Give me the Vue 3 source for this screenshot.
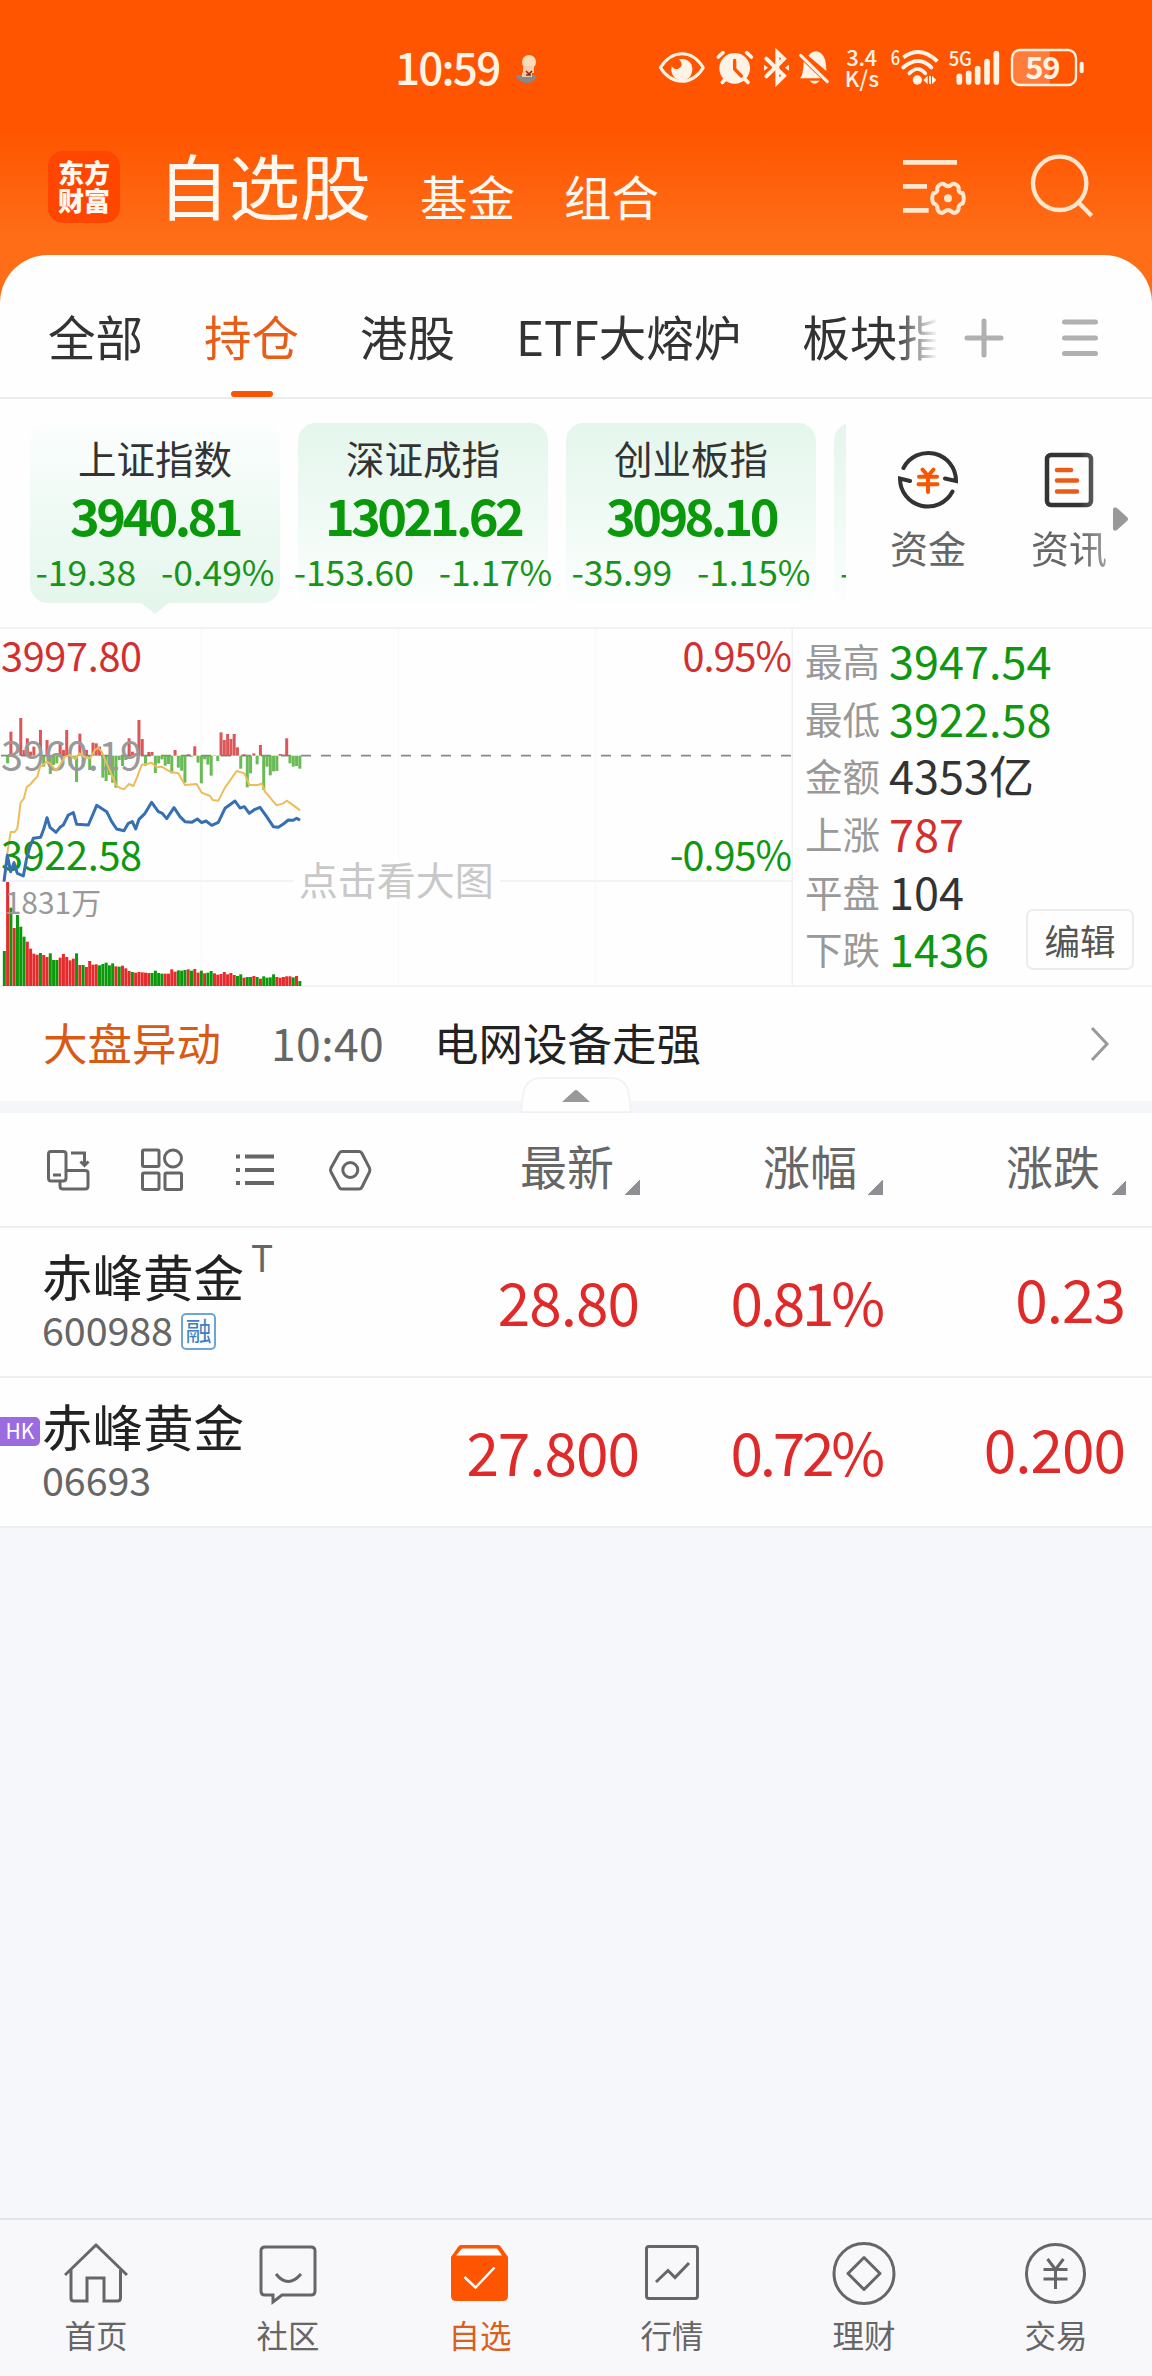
<script setup>
import { ref } from 'vue'

const tabs = ref(['全部', '持仓', '港股', 'ETF大熔炉', '板块指数'])
const activeTab = ref('持仓')

const indexes = ref([
  { name: '上证指数', value: '3940.81', change: '-19.38', percent: '-0.49%' },
  { name: '深证成指', value: '13021.62', change: '-153.60', percent: '-1.17%' },
  { name: '创业板指', value: '3098.10', change: '-35.99', percent: '-1.15%' }
])
const activeIndex = ref('上证指数')

const stats = ref([
  { label: '最高', value: '3947.54', color: 'green' },
  { label: '最低', value: '3922.58', color: 'green' },
  { label: '金额', value: '4353亿', color: 'dark' },
  { label: '上涨', value: '787', color: 'red' },
  { label: '平盘', value: '104', color: 'dark' },
  { label: '下跌', value: '1436', color: 'green' }
])

const stocks = ref([
  { id: 1, name: '赤峰黄金', code: '600988', mark: 'T', tag: '融', price: '28.80', percent: '0.81%', change: '0.23' },
  { id: 2, name: '赤峰黄金', code: '06693', market: 'HK', price: '27.800', percent: '0.72%', change: '0.200' }
])
const columns = ['最新', '涨幅', '涨跌']

const navs = ref(['首页', '社区', '自选', '行情', '理财', '交易'])
const activeNav = ref('自选')

// minute bars: x step in chart units
const step = 9.85
const barX = (i) => 8 + i * step

// volume, height of every minute
const volumes = [
  105, 312, 235, 174, 213, 178, 148, 133, 112, 97, 94, 99, 93, 87, 98, 78, 78, 85, 96, 87, 77, 82, 98, 63, 63, 57, 75,
  64, 65, 62, 66, 70, 62, 68, 59, 58, 61, 53, 45, 42, 40, 42, 41, 40, 39, 39, 46, 39, 37, 37, 37, 50, 43, 47, 46, 48,
  50, 46, 51, 40, 46, 38, 40, 45, 38, 34, 36, 42, 35, 39, 33, 30, 35, 25, 27, 27, 30, 27, 22, 29, 25, 26, 35, 27, 25,
  27, 29, 29, 26, 30, 15
]
const volumeColors =
  'grgrgggrrrrgrrgggrrrrrgrgrrrrgggggrgrrrgrrrrrggggrrrrgggrgrrgrggrrrrrrrggrggrgrggggrrrrrgrg'

// strength bars round the zero line, positive is red
const strengths = [
  0, -23, 72, 2, 1, 113, 17, 52, 12, 27, 2, 77, -33, 47, -55, -28, -23, 37, 17, 77, -30, -8, -79, 66, -33, 17, -43, 39,
  37, 27, -66, -76, -58, -81, -96, -13, -31, -13, 52, 12, 7, 107, 50, -30, 11, 11, -52, -23, -11, -30, -25, -53, 17,
  -36, -45, -81, 4, -3, 28, -21, -83, -11, -27, -60, 1, -16, 70, 47, 65, 50, 65, 25, -39, 4, -95, -53, 7, -26, 32,
  -103, -33, -59, -47, -46, 5, 3, 52, -23, -33, -31, -39
]

const averageLine =
  '12,783 22,700 32,636 44,636 52,625 62,548 72,535 80,502 92,492 102,480 112,470 120,440 130,435 140,425 150,430 168,452 180,435 195,410 210,405 225,418 238,400 255,412 270,415 285,390 295,383 305,395 320,430 333,460 348,495 360,504 372,508 387,492 400,498 412,470 425,435 440,432 455,428 470,442 485,440 510,455 535,460 555,495 590,492 605,518 630,528 638,540 655,542 675,503 710,453 733,460 748,495 775,495 785,490 795,515 830,556 850,550 860,542 880,556 900,571'
const priceLine =
  '12,785 22,706 32,755 42,728 52,760 70,768 80,715 90,680 100,655 122,652 132,625 141,593 150,622 168,637 180,622 190,615 205,585 220,578 230,613 265,615 280,580 290,556 320,575 335,605 350,627 372,632 385,610 397,605 407,627 417,598 435,580 455,547 475,575 487,580 500,596 522,563 540,590 555,605 575,607 592,597 605,608 618,603 635,616 655,607 675,565 705,543 720,564 733,560 748,580 765,568 780,562 800,590 820,620 835,622 850,612 865,600 880,601 890,595 900,601'
</script>

<template>
  <div class="page">
    <header class="top">
      <div class="status">
        <span class="clock">10:59</span>
        <svg class="avatar" width="24" height="30" viewBox="0 0 24 30">
          <path d="M0 21 L22 21 Q20 29 11 29 Q4 28 0 21Z" fill="#84888f" />
          <path d="M7 19 Q12 15 17 19 L17 23 L7 23Z" fill="#efc8a5" />
          <circle cx="14" cy="8" r="7" fill="#fcdcb8" />
          <path d="M8 12h11v7h-11z" fill="#f6cfaa" />
          <path d="M11 17l3 3 3-3M11 21h5" stroke="#8d2a20" stroke-width="1.6" fill="none" />
        </svg>
        <svg class="status-icons" width="512" height="80" viewBox="0 0 1536 240">
          <g fill="none" stroke="#fff3e6" stroke-width="9" stroke-linecap="round" stroke-linejoin="round">
            <path d="M61 113 Q88 71 126 71 Q164 71 190 113 Q164 154 126 154 Q88 154 61 113Z" />
            <path d="M235 81l14-13M320 68l14 13M247 157l8-8M324 157l-8-8" stroke-width="11" />
            <path d="M379 86l53 51-20 20V67l20 19-53 53" stroke-width="12" stroke-linejoin="miter" />
            <path d="M482 76l80 79" stroke-width="9" />
            <path d="M790 82Q841 45 892 94" stroke-width="12" stroke-linecap="butt" />
            <path d="M790 112Q836 74 874 112" stroke-width="12" />
            <path d="M808 130Q834 104 856 130" stroke-width="11" />
            <rect x="1116" y="60" width="192" height="105" rx="24" stroke-width="7" />
            <path d="M1325 101v23" stroke-width="12" />
            <path d="M958 139v17" stroke-width="17" />
            <path d="M986 130v26M1013 116v40M1041 95v61M1069 71v85" stroke-width="17" />
          </g>
          <g fill="#fff3e6">
            <path d="M117 88 Q135 106 114 117 Q101 119 95 108 Q90 130 106 145 Q128 157 147 143 Q163 126 154 103 Q142 84 117 88Z" />
            <circle cx="284" cy="115" r="46" />
            <path d="M372 104l12 9-12 9zM447 104l-12 9 12 9z" />
            <path d="M505 77Q523 55 543 70Q559 82 559 123ZM491 95L542 145H480Q490 135 491 95Z" />
            <path d="M509 152h30q-15 18-30 0z" />
            <circle cx="832" cy="150" r="14" />
            <path d="M850 150l13-13v26zM867 137l6 2v24l-6-2zM889 150l-13-13v26z" />
            <path d="M1140 62h89v101h-89q-22 0-22-24v-53q0-24 22-24z" opacity=".25" />
          </g>
          <path d="M284 91v26l20 21" stroke="#ff5500" stroke-width="10" fill="none" stroke-linecap="round" />
          <g class="status-text">
            <text x="619" y="107" font-size="66" textLength="92">3.4</text>
            <text x="614" y="171" font-size="66" textLength="103">K/s</text>
            <text x="752" y="105" font-size="60" textLength="28" lengthAdjust="spacingAndGlyphs">6</text>
            <text x="926" y="109" font-size="62" textLength="70" lengthAdjust="spacingAndGlyphs">5G</text>
            <text x="1156" y="147" font-size="93" textLength="106" class="bold">59</text>
          </g>
        </svg>
      </div>
      <div class="title-bar">
        <div class="logo"><span>东方</span><span>财富</span></div>
        <h1>自选股</h1>
        <span class="sub-title">基金</span>
        <span class="sub-title">组合</span>
        <svg class="filter" width="70" height="70" viewBox="120 65 210 210" fill="none" stroke="#ffe6cf" stroke-width="14">
          <path d="M129 99h162M129 171h72M129 243h77" />
          <path
            d="M251 164Q264 177 277 164Q283 162 290 167Q298 171 296 184Q300 192 308 192Q315 207 308 222Q299 224 296 232Q297 245 288 249Q281 253 275 247Q264 238 253 247Q247 253 240 249Q231 245 232 232Q229 224 220 222Q213 207 220 192Q228 192 232 184Q230 171 238 167Q245 162 251 164Z"
            stroke-width="12"
          />
          <circle cx="264" cy="207" r="12" fill="#ffe6cf" stroke="none" />
        </svg>
        <svg class="search" width="70" height="70" viewBox="500 65 210 210" fill="none" stroke="#ffe6cf" stroke-width="13">
          <circle cx="598" cy="162" r="80" />
          <path d="M653 218l41 41" />
        </svg>
      </div>
    </header>

    <main class="panel">
      <nav class="tabs">
        <div class="tab-list">
          <span v-for="tab in tabs" :key="tab" class="tab" :class="{ active: tab === activeTab }" @click="activeTab = tab">{{ tab }}</span>
        </div>
        <svg class="plus" width="40" height="40" viewBox="0 0 40 40">
          <path d="M20 3v34M3 20h34" stroke="#b0b0b0" stroke-width="5" stroke-linecap="round" />
        </svg>
        <svg class="menu" width="36" height="40" viewBox="0 0 36 40">
          <path d="M2.5 4h31M2.5 20h31M2.5 35.500h31" stroke="#b0b0b0" stroke-width="5" stroke-linecap="round" />
        </svg>
      </nav>

      <section class="indexes">
        <div class="cards">
          <div v-for="item in indexes" :key="item.name" class="card" :class="{ active: item.name === activeIndex }" @click="activeIndex = item.name">
            <span class="card-name">{{ item.name }}</span>
            <strong class="card-value">{{ item.value }}</strong>
            <span class="card-change"><span>{{ item.change }}</span><span>{{ item.percent }}</span></span>
          </div>
          <div class="card partial"><span class="card-change">-</span></div>
        </div>
        <div class="quick">
          <svg width="64" height="64" viewBox="0 0 64 64" fill="none" stroke="#333" stroke-width="4" stroke-linecap="round">
            <path d="M7.500 20A27.800 27.800 0 0 1 60 33L49 30.500M56.500 43.500A27.800 27.800 0 0 1 4 30.500L14 33" />
            <path d="M26.500 21.500L32 28l5.500-6.500M23 28.700h18M22.500 36.300h19M32 28v16" stroke="#fa5500" />
          </svg>
          <span>资金</span>
        </div>
        <div class="quick news">
          <svg width="64" height="64" viewBox="0 0 64 64" fill="none" stroke="#333" stroke-width="4.500">
            <rect x="10" y="7" width="44" height="50" rx="4" />
            <path d="M20 22h14M20 32.500h20M20 43.500h20" stroke="#e85d18" stroke-linecap="round" />
          </svg>
          <span>资讯</span>
        </div>
        <svg class="more" width="15" height="26" viewBox="0 0 15 26">
          <path d="M0 3Q1 0 4 2L14 11Q16 13 14 15L4 24Q1 26 0 23Z" fill="#999" />
        </svg>
      </section>

      <section class="market">
        <svg class="chart" width="793" height="360" viewBox="0 21 2379 1080">
          <path d="M604 24V1098M1195 24V1098M1786 24V1098" stroke="#f0f0f2" stroke-width="3" stroke-dasharray="4 4" />
          <path d="M0 24H2379M0 783H2379M0 1098H2379M2377 24V1098" stroke="#f0f0f2" stroke-width="5" fill="none" />
          <rect x="880" y="715" width="620" height="130" fill="#fefefe" />
          <path d="M0 407H2373" stroke="#888" stroke-width="5" stroke-dasharray="30 30" stroke-dashoffset="-3" />
          <rect
            v-for="(s, i) in strengths"
            :key="'s' + i"
            :x="barX(i) + 0.5"
            :y="s > 0 ? 407 - s : 407"
            width="9"
            :height="Math.abs(s)"
            :fill="s > 0 ? '#d94a4a' : '#5fb548'"
            opacity="0.93"
          />
          <text x="3" y="450" class="num gray">3960.19</text>
          <polyline :points="averageLine" fill="none" stroke="#ecbd58" stroke-width="6" stroke-linejoin="round" />
          <text x="3" y="153" class="num red">3997.80</text>
          <text x="2373" y="153" class="num percent red" text-anchor="end">0.95%</text>
          <text x="3" y="749" class="num green">3922.58</text>
          <text x="2373" y="749" class="num percent green" text-anchor="end">-0.95%</text>
          <polyline :points="priceLine" fill="none" stroke="#376fb3" stroke-width="9" stroke-linejoin="round" />
          <rect
            v-for="(v, i) in volumes"
            :key="'v' + i"
            :x="barX(i) + 0.5"
            :y="1098 - v"
            width="9"
            :height="v"
            :fill="volumeColors[i] === 'r' ? '#e52b2b' : '#0a990a'"
          />
          <text x="14" y="882" class="volume">1831万</text>
          <text x="896" y="824" class="hint">点击看大图</text>
        </svg>
        <div class="stats">
          <div v-for="stat in stats" :key="stat.label" class="stat">
            <span class="stat-label">{{ stat.label }}</span>
            <span class="stat-value" :class="stat.color">{{ stat.value }}</span>
          </div>
          <button class="edit">编辑</button>
        </div>
      </section>

      <section class="alert">
        <span class="alert-title">大盘异动</span>
        <span class="alert-time">10:40</span>
        <span class="alert-text">电网设备走强</span>
        <svg class="chevron" width="20" height="36" viewBox="0 0 20 36">
          <path d="M2 2l15 16L2 34" fill="none" stroke="#999" stroke-width="3" />
        </svg>
      </section>
      <div class="divider">
        <svg class="handle" width="112" height="36" viewBox="0 0 112 36">
          <path d="M1 35L3 18Q5 1 22 1H90Q107 1 109 18L111 35Z" fill="#fefefe" stroke="#f1f1f3" stroke-width="1.500" />
          <path d="M42 25L54 14Q56 12 58 14L70 25Z" fill="#999" />
        </svg>
      </div>

      <section class="list">
        <div class="list-head">
          <div class="tools">
            <svg width="44" height="44" viewBox="0 0 44 44">
              <path d="M14 33H5Q2.500 33 2.500 30V6Q2.500 3.500 5 3.500H17Q20 3.500 20 6V22M14 32V38Q14 41 17 41H39Q42 41 42 38V25Q42 22.500 39 22.500H20V30Q20 33 17 33H14M25 5H38.500V17M34.500 13.500l4 4 4-4M7 27h8" />
            </svg>
            <svg width="44" height="44" viewBox="0 0 44 44">
              <rect x="2.500" y="2" width="16.500" height="16.500" rx="1.500" />
              <circle cx="33" cy="10.500" r="8.500" />
              <rect x="2.500" y="25" width="16.500" height="16.500" rx="1.500" />
              <rect x="25" y="25" width="16.500" height="16.500" rx="1.500" />
            </svg>
            <svg width="44" height="44" viewBox="0 0 44 44">
              <path d="M2 8.500h4M11 8.500h29M2 22h4M11 22h29M2 35h4M11 35h29" stroke-width="4" />
            </svg>
            <svg width="44" height="44" viewBox="0 0 44 44">
              <path d="M14 3.500H31Q33 3.500 34 5.500L41.500 20Q42.300 22 41.500 24L34 39Q33 41 31 41H14Q12 41 11 39L3 24Q2 22 3 20L11 5.500Q12 3.500 14 3.500Z" />
              <circle cx="22.300" cy="22" r="7.500" />
            </svg>
          </div>
          <div v-for="column in columns" :key="column" class="column">
            <span>{{ column }}</span>
            <i class="sort"></i>
          </div>
        </div>
        <div v-for="stock in stocks" :key="stock.id" class="row">
          <span v-if="stock.market" class="market-tag">{{ stock.market }}</span>
          <div class="stock">
            <div class="stock-name">{{ stock.name }}<sup v-if="stock.mark">{{ stock.mark }}</sup></div>
            <div class="stock-code">{{ stock.code }}<span v-if="stock.tag" class="tag">{{ stock.tag }}</span></div>
          </div>
          <span class="price">{{ stock.price }}</span>
          <span class="price rate">{{ stock.percent }}</span>
          <span class="price last">{{ stock.change }}</span>
        </div>
      </section>
    </main>

    <footer class="nav">
      <div v-for="(nav, i) in navs" :key="nav" class="nav-item" :class="{ active: nav === activeNav }" @click="activeNav = nav">
        <svg width="64" height="66" viewBox="0 0 64 66">
          <path v-if="i === 0" d="M1 34L32 4L63 34M7 29V57Q7 60 10 60H23V37H40V60H53Q56.500 60 56.500 57V29" />
          <path v-else-if="i === 1" d="M9 6H55Q59 6 59 10V50Q59 54 55 54H26L17 61V54H9Q5 54 5 50V10Q5 6 9 6ZM20 33Q32 48 45 33" />
          <g v-else-if="i === 2">
            <path d="M13 4H50Q52 4 53 6L60 16V55Q60 60 55 60H8Q3 60 3 55V16L10 6Q11 4 13 4Z" fill="#ff5500" stroke="none" />
            <path d="M14 7.500H49L54 14.500H8Z" fill="#fff" stroke="none" />
            <path d="M16.500 36L27.500 46.500L46.500 26.500" stroke="#fff" stroke-width="2.500" />
          </g>
          <path v-else-if="i === 3" d="M9 5.500H55Q57.500 5.500 57.500 8V55Q57.500 57.500 55 57.500H9Q6.500 57.500 6.500 55V8Q6.500 5.500 9 5.500ZM16 41L28 29.500L35 36.500L49 22" />
          <g v-else-if="i === 4">
            <circle cx="32" cy="32.500" r="30" />
            <path d="M32 16.500L48 32.500L32 48.500L16 32.500Z" stroke-linejoin="round" />
          </g>
          <g v-else>
            <circle cx="31.500" cy="32.500" r="29" />
            <path d="M23.500 18L31.500 28.500L39.500 18M19.500 28.500H43.500M19.500 38H43.500M31.500 28V48" />
          </g>
        </svg>
        <span>{{ nav }}</span>
      </div>
    </footer>
  </div>
</template>

<style>
body {
  background: #f6f7fa;
}
</style>

<style scoped>
.page {
  display: flex;
  flex-direction: column;
  width: 1152px;
  height: 2376px;
  overflow: hidden;
  background: #f6f7fa;
  font-family: 'Noto Sans CJK SC', sans-serif;
  color: #333;
}
svg {
  display: block;
  flex: none;
}
.green {
  color: #109710;
  fill: #109710;
}
.red {
  color: #d32f2f;
  fill: #d32f2f;
}
.dark {
  color: #333;
}

.top {
  height: 310px;
  flex: none;
  background: linear-gradient(#ff5500 0, #ff5500 130px, #ff6d17 235px, #ff6d17);
}
.status {
  display: flex;
  align-items: flex-start;
  height: 130px;
  padding: 30px 0 0 395px;
  box-sizing: border-box;
  color: #fff3e6;
}
.clock {
  width: 120px;
  margin-top: 4px;
  font-size: 44px;
  line-height: 64px;
  font-weight: 500;
  letter-spacing: -1.8px;
}
.avatar {
  margin-top: 24px;
}
.status-icons {
  margin-left: 101px;
}
.status-text {
  fill: #fff3e6;
  font-weight: 500;
}
.status-text .bold {
  font-weight: 700;
}
.title-bar {
  display: flex;
  align-items: flex-start;
  padding: 21px 0 0 48px;
  color: #fff8f0;
}
.logo {
  display: flex;
  flex-direction: column;
  align-items: center;
  justify-content: center;
  width: 72px;
  height: 72px;
  border-radius: 15px;
  background: #ff4600;
  font-size: 26px;
  line-height: 30px;
  font-weight: 900;
}
.logo span {
  margin-top: -2px;
}
h1 {
  margin: -8px 0 0 38px;
  font-size: 71px;
  line-height: 80px;
  font-weight: 400;
}
.sub-title {
  margin: 13px 0 0 49px;
  font-size: 47.500px;
  line-height: 64px;
}
.sub-title + .sub-title {
  margin-left: 49px;
}
.filter {
  margin-left: auto;
}
.search {
  margin: 0 55px 0 57px;
}

.panel {
  display: flex;
  flex-direction: column;
  margin-top: -55px;
  border-radius: 48px 48px 0 0;
  background: #fefefe;
}
.tabs {
  display: flex;
  align-items: center;
  height: 144px;
  box-sizing: border-box;
  padding: 24px 0 0 48px;
  border-bottom: 2px solid #ebebed;
}
.tab-list {
  display: flex;
  gap: 61px;
  width: 888px;
  overflow: hidden;
  white-space: nowrap;
  -webkit-mask-image: linear-gradient(90deg, #000 848px, transparent 890px);
  mask-image: linear-gradient(90deg, #000 848px, transparent 890px);
}
.tab {
  position: relative;
  height: 118px;
  font-size: 47.500px;
  line-height: 114px;
}
.tab.active {
  color: #e85d18;
}
.tab.active::after {
  content: '';
  position: absolute;
  left: 27px;
  bottom: 0;
  width: 42px;
  height: 6px;
  border-radius: 3px;
  background: #fa5500;
}
.plus {
  margin-left: 28px;
}
.menu {
  margin-left: 58px;
}

.indexes {
  display: flex;
  height: 228px;
}
.cards {
  display: flex;
  gap: 18px;
  width: 816px;
  padding: 24px 0 0 30px;
  overflow: hidden;
}
.card {
  position: relative;
  display: flex;
  flex-direction: column;
  align-items: center;
  flex: none;
  width: 250px;
  height: 180px;
  border-radius: 18px;
  background: linear-gradient(#e4f6ec, #fbfefd);
  white-space: nowrap;
}
.card.active {
  background: linear-gradient(#fbfefd, #e4f6ec);
}
.card.active::after {
  content: '';
  position: absolute;
  top: 179px;
  left: 110px;
  border: 15px solid transparent;
  border-top: 12px solid #e4f6ec;
  border-bottom: 0;
}
.card-name {
  margin-top: 9px;
  font-size: 38.500px;
  line-height: 50px;
}
.card-value {
  margin-top: 3px;
  font-size: 50.500px;
  line-height: 58px;
  font-weight: 700;
  letter-spacing: -3.6px;
  color: #0a990a;
}
.card-change {
  display: flex;
  gap: 25px;
  margin-top: 3px;
  font-size: 35.500px;
  line-height: 50px;
  letter-spacing: -0.1px;
  color: #1a931a;
}
.partial {
  align-items: flex-start;
  justify-content: flex-end;
}
.partial .card-change {
  margin: 0 0 7px 6px;
}
.quick {
  display: flex;
  flex-direction: column;
  align-items: center;
  width: 80px;
  margin: 49px 0 0 42px;
  font-size: 38px;
  line-height: 50px;
  color: #666;
}
.quick span {
  margin-top: 10px;
}
.news {
  margin-left: 61px;
  -webkit-mask-image: linear-gradient(90deg, #000 50px, rgba(0, 0, 0, 0.6) 80px);
  mask-image: linear-gradient(90deg, #000 50px, rgba(0, 0, 0, 0.6) 80px);
}
.more {
  margin: 107px 0 0 4px;
}

.market {
  display: flex;
  height: 360px;
}
.num {
  font-size: 119px;
  letter-spacing: -1px;
}
.num.percent {
  letter-spacing: -3px;
}
.gray {
  fill: #999;
}
.volume {
  font-size: 90px;
  fill: #999;
}
.hint {
  font-size: 117px;
  fill: #c8c8c8;
}
.stats {
  position: relative;
  flex: 1;
  height: 360px;
  box-sizing: border-box;
  padding: 2px 0 0 12px;
  border-top: 2px solid #f2f2f4;
  border-bottom: 2px solid #f2f2f4;
}
.stat {
  display: flex;
  height: 57.700px;
  line-height: 57px;
}
.stat-label {
  width: 84px;
  font-size: 37.500px;
  color: #999;
}
.stat-value {
  font-size: 45px;
}
.edit {
  position: absolute;
  right: 18px;
  bottom: 15px;
  width: 108px;
  height: 61px;
  padding: 0;
  border: 2px solid #ececee;
  border-radius: 7px;
  background: #fefefe;
  font-family: inherit;
  font-size: 35.500px;
  line-height: 52px;
  color: #555;
}

.alert {
  display: flex;
  align-items: center;
  height: 114px;
  padding: 0 42px 0 43px;
  font-size: 44.500px;
  line-height: 60px;
}
.alert span {
  margin-bottom: 4px;
}
.alert-title {
  width: 228px;
  color: #d95a14;
}
.alert-time {
  width: 163px;
  letter-spacing: 0.4px;
  color: #666;
}
.alert-text {
  color: #222;
}
.chevron {
  margin-left: auto;
}
.divider {
  position: relative;
  height: 12px;
  background: #f5f6f9;
}
.handle {
  position: absolute;
  left: 520px;
  bottom: 0;
}

.list-head {
  display: flex;
  align-items: center;
  height: 115px;
  box-sizing: border-box;
  border-bottom: 2px solid #efeff1;
  font-size: 47px;
  line-height: 60px;
  color: #666;
}
.tools {
  display: flex;
  gap: 50px;
  width: 351px;
  padding-left: 46px;
}
.tools svg {
  fill: none;
  stroke: #666;
  stroke-width: 3;
}
.column {
  display: flex;
  align-items: center;
  justify-content: flex-end;
  width: 243px;
}
.column span {
  margin-bottom: 10px;
}
.sort {
  width: 15px;
  height: 15px;
  margin: 36px 0 0 11px;
  background: linear-gradient(135deg, transparent 50%, #8e8e93 50%);
}
.row {
  position: relative;
  display: flex;
  height: 150px;
  box-sizing: border-box;
  border-bottom: 2px solid #efeff1;
}
.stock {
  width: 354px;
  padding: 14px 0 0 42px;
}
.stock-name {
  display: flex;
  font-size: 50.500px;
  line-height: 66px;
  color: #222;
}
.stock-name sup {
  margin: -12px 0 0 7px;
  font-size: 37px;
  line-height: 52px;
  color: #666;
}
.stock-code {
  display: flex;
  align-items: center;
  font-size: 39.500px;
  line-height: 42px;
  letter-spacing: -0.1px;
  color: #666;
}
.tag {
  width: 31px;
  height: 33px;
  margin: 4px 0 0 8px;
  border: 2px solid #6fa5d6;
  border-radius: 5px;
  font-size: 26px;
  line-height: 29px;
  text-align: center;
  color: #3d7fc0;
}
.market-tag {
  position: absolute;
  left: 0;
  top: 39px;
  width: 40px;
  height: 29px;
  border-radius: 0 5px 5px 0;
  background: #9b6be0;
  font-size: 21px;
  line-height: 26px;
  text-align: center;
  color: #fff;
}
.price {
  width: 243px;
  font-size: 58.500px;
  line-height: 146px;
  letter-spacing: -1px;
  text-align: right;
  color: #e02a2a;
}
.rate {
  letter-spacing: -3.2px;
}
.last {
  line-height: 140px;
}

.nav {
  display: flex;
  height: 158px;
  margin-top: auto;
  box-sizing: border-box;
  border-top: 2px solid #e4e5e8;
  background: #f8f8fb;
}
.nav-item {
  display: flex;
  flex-direction: column;
  align-items: center;
  width: 192px;
  padding-top: 21px;
  font-size: 31.500px;
  line-height: 40px;
  color: #666;
}
.nav-item svg {
  fill: none;
  stroke: #666;
  stroke-width: 3;
}
.nav-item span {
  margin-top: 7px;
}
.nav-item.active {
  color: #d9601c;
}
</style>
